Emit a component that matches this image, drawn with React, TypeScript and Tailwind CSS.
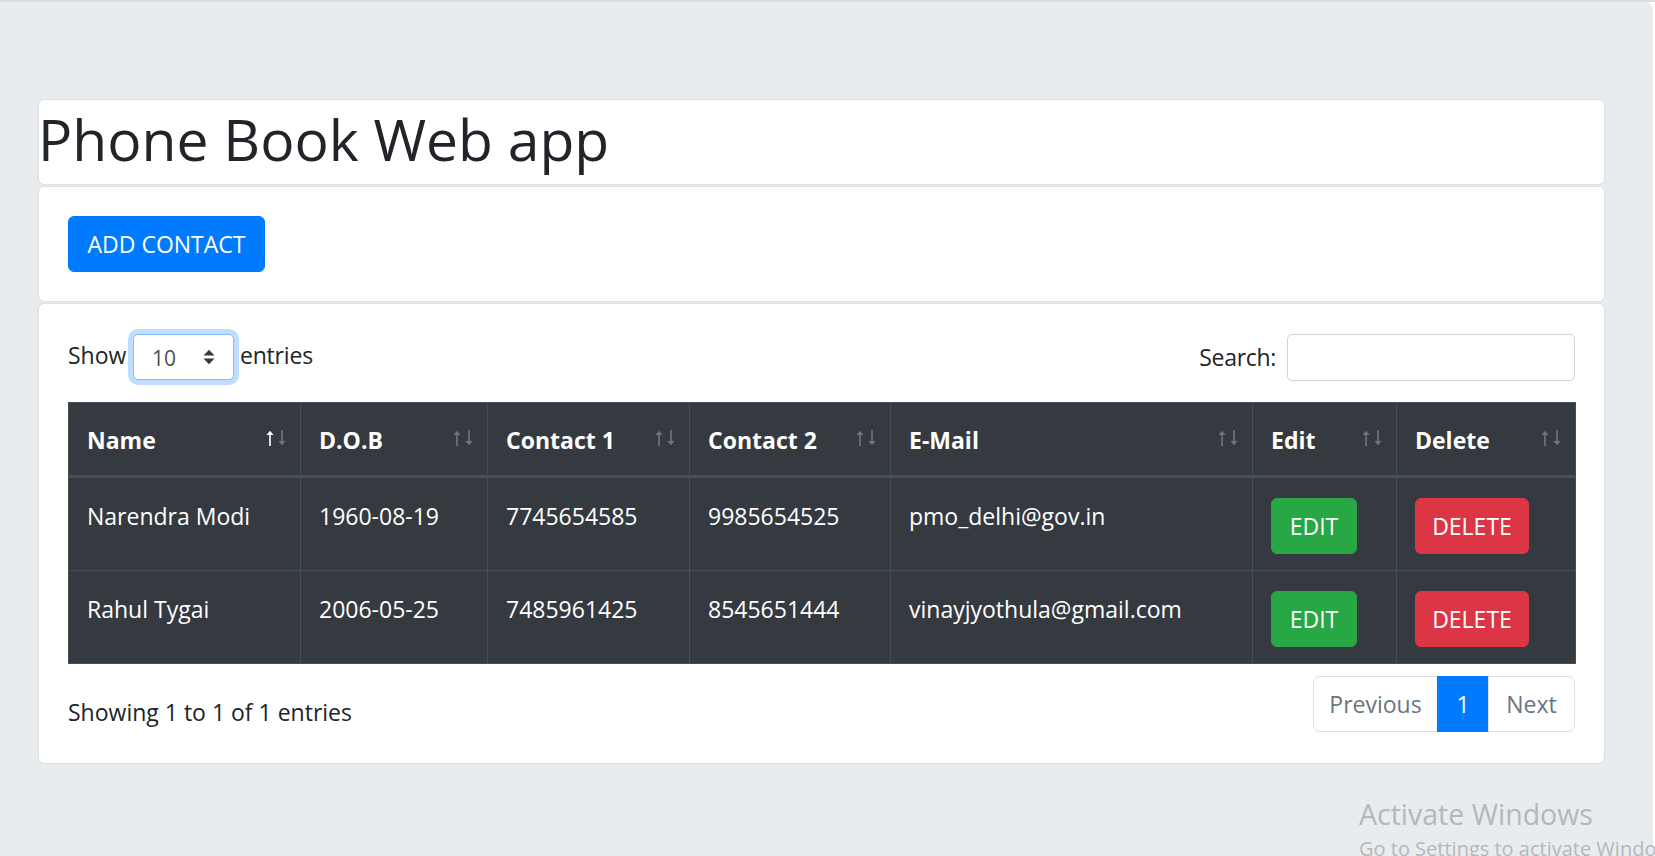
import React from "react";

function SortArrow({ dir, active }: { dir: "up" | "down"; active?: boolean }) {
  const color = active ? "#ffffff" : "#71767b";
  return (
    <svg width="8" height="16" viewBox="0 0 8 16" className="block">
      {dir === "up" ? (
        <>
          <path d="M0.5 5 L4 0.8 L7.5 5 Z" fill={color} />
          <rect x="3.2" y="4" width="1.6" height="12" fill={color} />
        </>
      ) : (
        <>
          <rect x="3.2" y="0" width="1.6" height="12" fill={color} />
          <path d="M0.5 11 L4 15.2 L7.5 11 Z" fill={color} />
        </>
      )}
    </svg>
  );
}

function Th({ label, active }: { label: string; active?: boolean }) {
  return (
    <th className="relative border border-[#454d55] border-b-[3px] px-[18px] pt-[19px] pb-[17px] text-left align-bottom font-bold leading-[36px]">
      {label}
      <span className="absolute top-[27px] right-[26px]">
        <SortArrow dir="up" active={active} />
      </span>
      <span className="absolute top-[27px] right-[14px]">
        <SortArrow dir="down" />
      </span>
    </th>
  );
}

function Td({ children }: { children: React.ReactNode }) {
  return (
    <td className="border border-[#454d55] px-[18px] pt-[20px] pb-[16px] align-top leading-[36px]">
      {children}
    </td>
  );
}

const rows = [
  ["Narendra Modi", "1960-08-19", "7745654585", "9985654525", "pmo_delhi@gov.in"],
  ["Rahul Tygai", "2006-05-25", "7485961425", "8545651444", "vinayjyothula@gmail.com"],
];

export default function App() {
  return (
    <div className="relative h-[856px] w-full overflow-hidden bg-white font-['Open_Sans',sans-serif] text-[23px] text-[#212529]">
      <div className="h-[2px] w-full bg-[#dcdde0]" />
      <div className="mr-[2px] h-[854px] rounded-tr-[8px] bg-[#e9ecef] pl-[38px] pt-[97px]">
        <div className="flex w-[1567px] flex-col gap-[1px]">
          {/* Title card */}
          <div className="h-[86px] rounded-[6px] border border-[rgba(0,0,0,0.125)] bg-white pt-[3px]">
            <h1 className="-ml-[1px] text-[57px] font-normal leading-[72px] text-[#212529]">Phone Book Web app</h1>
          </div>

          {/* Add contact card */}
          <div className="rounded-[6px] border border-[rgba(0,0,0,0.125)] bg-white p-[29px]">
            <button className="h-[56px] w-[197px] rounded-[6px] border border-[#007bff] bg-[#007bff] text-[23px] leading-[36px] text-white">
              ADD CONTACT
            </button>
          </div>

          {/* Table card */}
          <div className="rounded-[6px] border border-[rgba(0,0,0,0.125)] bg-white px-[29px] pt-[29px] pb-[31px]">
            <div className="flex h-[48px] items-center justify-between">
              <div className="flex items-center">
                <span className="w-[65px] pb-[4px]">Show</span>
                <div className="flex h-[46px] w-[101px] items-center justify-between rounded-[5px] border border-[#80bdff] bg-white pl-[18px] pr-[18px] shadow-[0_0_0_5px_rgba(0,123,255,0.25)]">
                  <span className="pt-[4px] text-[21px] text-[#495057]">10</span>
                  <svg width="12" height="16" viewBox="0 0 12 16">
                    <path d="M0.5 6.5 L6 0.8 L11.5 6.5 Z" fill="#343a40" />
                    <path d="M0.5 9.5 L6 15.2 L11.5 9.5 Z" fill="#343a40" />
                  </svg>
                </div>
                <span className="ml-[6px] pb-[4px] tracking-[-0.2px]">entries</span>
              </div>
              <div className="flex items-center">
                <span className="mr-[11px] tracking-[-0.3px]">Search:</span>
                <input
                  type="search"
                  className="h-[47px] w-[288px] rounded-[5px] border border-[#ced4da] bg-white px-[12px] text-[21px] outline-none"
                />
              </div>
            </div>

            <table className="mt-[21px] w-[1507px] table-fixed border-collapse bg-[#343a40] text-white">
              <colgroup>
                <col className="w-[232px]" />
                <col className="w-[187px]" />
                <col className="w-[202px]" />
                <col className="w-[201px]" />
                <col className="w-[362px]" />
                <col className="w-[144px]" />
                <col className="w-[179px]" />
              </colgroup>
              <thead>
                <tr>
                  <Th label="Name" active />
                  <Th label="D.O.B" />
                  <Th label="Contact 1" />
                  <Th label="Contact 2" />
                  <Th label="E-Mail" />
                  <Th label="Edit" />
                  <Th label="Delete" />
                </tr>
              </thead>
              <tbody>
                {rows.map((r) => (
                  <tr key={r[0]}>
                    {r.map((c, i) => (
                      <Td key={i}>{c}</Td>
                    ))}
                    <Td>
                      <button className="block h-[56px] w-[86px] rounded-[6px] border border-[#28a745] bg-[#28a745] text-[23px] leading-[36px] text-white">
                        EDIT
                      </button>
                    </Td>
                    <Td>
                      <button className="block h-[56px] w-[114px] rounded-[6px] border border-[#dc3545] bg-[#dc3545] text-[23px] leading-[36px] text-white">
                        DELETE
                      </button>
                    </Td>
                  </tr>
                ))}
              </tbody>
            </table>

            <div className="mt-[9px] flex items-start justify-between">
              <div className="pt-[21px] leading-[36px]">Showing 1 to 1 of 1 entries</div>
              <div className="mt-[3px] flex h-[56px] leading-[30px]">
                <div className="flex w-[125px] items-center justify-center rounded-l-[6px] border border-[#dee2e6] bg-white text-[#6c757d]">
                  Previous
                </div>
                <div className="-ml-px flex w-[52px] items-center justify-center border border-[#007bff] bg-[#007bff] text-white">
                  1
                </div>
                <div className="-ml-px flex w-[87px] items-center justify-center rounded-r-[6px] border border-[#dee2e6] bg-white text-[#6c757d]">
                  Next
                </div>
              </div>
            </div>
          </div>
        </div>
      </div>

      {/* Windows activation watermark */}
      <div className="absolute left-[1359px] top-[800px] whitespace-nowrap text-[#b5b7b9]">
        <div className="text-[28.5px] leading-[28px]">Activate Windows</div>
        <div className="mt-[11px] text-[20px] leading-[20px]">Go to Settings to activate Windows.</div>
      </div>
    </div>
  );
}
